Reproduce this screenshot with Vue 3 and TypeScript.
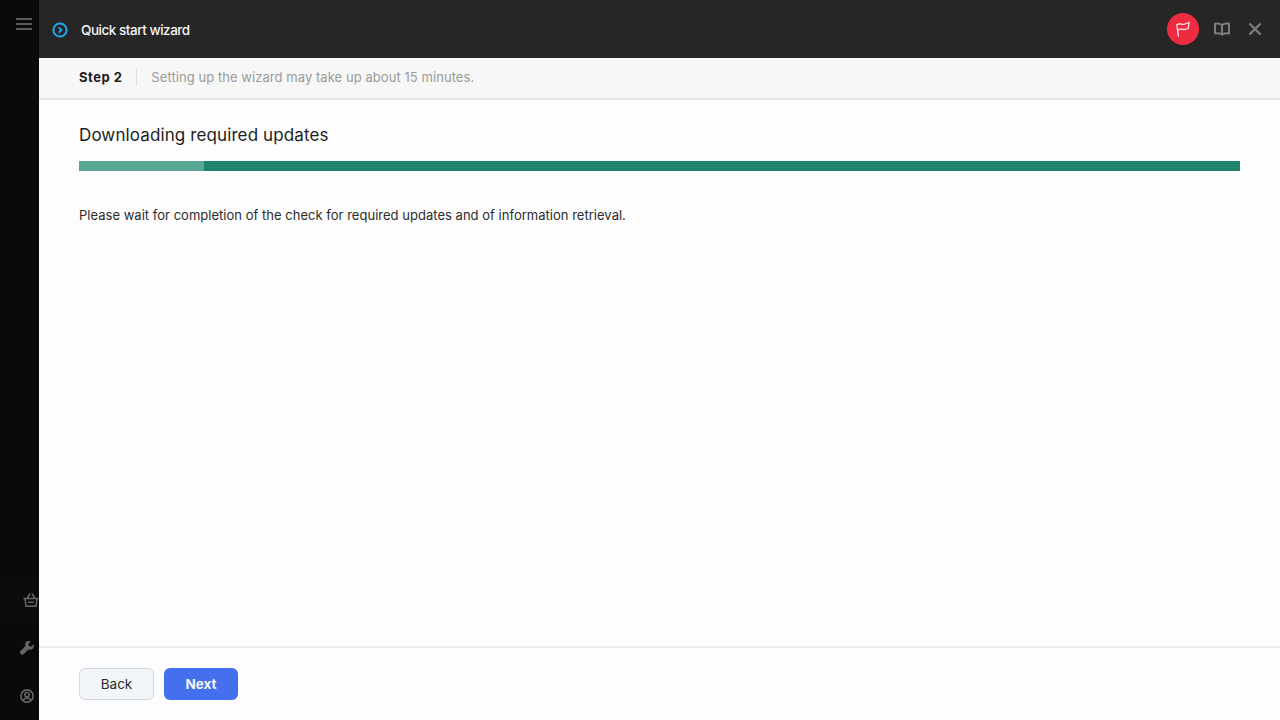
<script setup lang="ts">
const title = 'Downloading required updates'
const progress = 125
</script>

<template>
  <div class="page">
    <aside class="rail">
      <div class="rail-top">
        <svg width="16" height="14" viewBox="0 0 16 14"><path d="M0 2h16M0 7h16M0 12h16" stroke="#5a5a5a" stroke-width="2" fill="none"/></svg>
      </div>
      <div class="rail-bottom">
        <div class="basket">
          <svg width="16" height="16" viewBox="0 0 16 16" fill="none" stroke="#666" stroke-width="1.500"><path d="M.5 6.500h15M2 6.500l1 7.800h10l1-7.800M4 6.500 7 1.500M12 6.500 9 1.500M5.200 10.300h5.600" /></svg>
        </div>
        <div class="tool">
          <svg width="14" height="14" viewBox="0 0 14 14" fill="#666"><path d="M13.600 3.200 11.300 5.500 8.900 5l-.5-2.300L10.700.4C8.900-.3 7-.1 6.100 1 5.200 2 5 3.600 5.500 5L.6 10c-.8.8-.8 2.200 0 3s2.200.8 3 0L8.600 8.500c1.400.5 3 .2 4-.7 1.100-1 1.600-3 1-4.600z"/></svg>
        </div>
        <div class="user">
          <svg width="14" height="14" viewBox="0 0 16 16" fill="none" stroke="#666" stroke-width="1.800"><circle cx="8" cy="8" r="7"/><circle cx="8" cy="6.500" r="2.500"/><path d="M3.500 13c1-1.900 2.600-2.700 4.500-2.700s3.500.8 4.500 2.700"/></svg>
        </div>
      </div>
    </aside>

    <main class="panel">
      <header class="topbar">
        <div class="topbar-title">
          <svg width="16" height="16" viewBox="0 0 16 16" fill="none"><circle cx="8" cy="8" r="6.600" stroke="#1fa8ec" stroke-width="2"/><path d="M6.800 5.300 9.500 8l-2.700 2.700" stroke="#1fa8ec" stroke-width="1.900"/></svg>
          <span>Quick start wizard</span>
        </div>
        <div class="topbar-actions">
          <button class="flag" type="button" aria-label="Report">
            <svg width="16" height="16" viewBox="0 0 16 16" fill="none" stroke="#ffe9eb" stroke-width="1.300"><path d="M3.500 15.500 1.800 3.800C4.500 1.500 6.800 3.800 9 3.300c1.800-.4 3-1 5-1.800l-.8 6c-2 .9-3.700 1.300-5.400.8-1.800-.5-3.300-.2-5 .9"/></svg>
          </button>
          <svg width="16" height="14" viewBox="0 0 16 14" fill="none" stroke="#7d7d7d" stroke-width="2"><path d="M8 3v9.500c-2-1.200-4-1.500-7-1.200V1.700C4 1.400 6.300 1.600 8 3c1.700-1.400 4-1.600 7-1.300v9.600c-3-.3-5 0-7 1.200"/></svg>
          <svg class="close" width="14" height="14" viewBox="0 0 14 14" stroke="#7d7d7d" stroke-width="2.400"><path d="M1.500 1.500l11 11M12.500 1.500l-11 11"/></svg>
        </div>
      </header>

      <div class="stepbar">
        <strong>Step 2</strong>
        <span class="divider"></span>
        <span class="hint">Setting up the wizard may take up about 15 minutes.</span>
      </div>

      <section class="content">
        <h1>{{ title }}</h1>
        <div class="track"><div class="fill" :style="{ width: progress + 'px' }"></div></div>
        <p>Please wait for completion of the check for required updates and of information retrieval.</p>
      </section>

      <footer class="footer">
        <button class="btn secondary" type="button">Back</button>
        <button class="btn primary" type="button">Next</button>
      </footer>
    </main>
  </div>
</template>

<style>
html, body { margin: 0; background: #fdfdfd; }
</style>

<style scoped>
.page {
  display: flex;
  width: 1280px;
  height: 720px;
  overflow: hidden;
  font-family: Inter, "Noto Sans", sans-serif;
  color: #1d1d1b;
}
.rail {
  width: 39px;
  flex: none;
  background: #0a0a0a;
  display: flex;
  flex-direction: column;
  justify-content: space-between;
}
.rail-top { padding: 17px 0 0 16px; display: flex; }
.rail-bottom { display: flex; flex-direction: column; }
.basket { height: 48px; padding: 0 0 0 23px; box-sizing: border-box; display: flex; align-items: center; background: #0c0c0a; }
.tool { height: 48px; padding: 0 0 0 20px; box-sizing: border-box; display: flex; align-items: center; }
.user { height: 48px; padding: 0 0 0 20px; box-sizing: border-box; display: flex; align-items: center; }
.panel { flex: 1; min-width: 0; display: flex; flex-direction: column; background: #fdfdfd; }
.topbar {
  height: 58px;
  flex: none;
  background: #262626;
  display: flex;
  align-items: center;
  justify-content: space-between;
  padding: 2px 18px 0 13px;
  box-sizing: border-box;
}
.topbar-title { display: flex; align-items: center; gap: 13px; color: #f4f4f4; font-size: 13.500px; font-weight: 500; letter-spacing: -0.47px; }
.topbar-title svg { margin-top: -1px; }
.topbar-actions { display: flex; align-items: center; margin-top: -2px; }
.flag {
  width: 32px; height: 32px; border-radius: 50%; border: 0; padding: 0;
  background: #ef2b3f; display: flex; align-items: center; justify-content: center;
  margin-right: 15px;
}
.close { margin-left: 18px; }
.stepbar {
  height: 42px;
  flex: none;
  box-sizing: border-box;
  background: #f7f7f7;
  border-bottom: 2px solid #e6e6e6;
  display: flex;
  align-items: center;
  padding: 0 0 2px 40px;
  font-size: 13px;
}
.stepbar strong { font-weight: 700; color: #1d1d1b; letter-spacing: 0.5px; }
.divider { width: 1px; height: 18px; background: #dedede; margin: 0 14px; }
.hint { color: #9a9a9a; letter-spacing: 0.06px; }
.content { flex: 1; padding: 24px 40px 0; }
h1 { margin: 0; font-size: 17px; line-height: 22px; font-weight: 400; letter-spacing: 0.11px; color: #1d1d1b; }
.track { height: 10px; margin-top: 15px; background: #1e856d; }
.fill { height: 100%; background: #58a795; }
p { margin: 35px 0 0; font-size: 13px; line-height: 18px; color: #2c2c2c; letter-spacing: 0.02px; }
.footer {
  height: 74px;
  flex: none;
  box-sizing: border-box;
  border-top: 2px solid #eeeeee;
  padding: 20px 0 0 40px;
  display: flex;
  gap: 10px;
}
.btn {
  height: 32px;
  border-radius: 6px;
  font-family: inherit;
  font-size: 13.500px;
  padding: 0;
  box-sizing: border-box;
}
.secondary { width: 75px; background: #f3f6f9; border: 1px solid #d2d8df; color: #2a2a2a; }
.primary { width: 74px; background: #4470ee; border: 0; color: #f3f5fe; font-weight: 700; }
</style>
